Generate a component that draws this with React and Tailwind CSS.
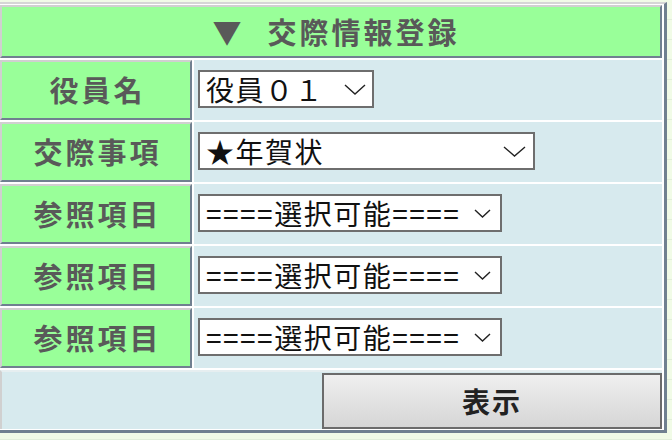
import React from 'react';

const font = { fontFamily: '"Noto Sans CJK JP", "Noto Sans", sans-serif' };

function Chevron({ w, h }) {
  return (
    <svg width={w} height={h} viewBox={`0 0 ${w} ${h}`} className="shrink-0">
      <polyline points={`1,1 ${w / 2},${h - 1} ${w - 1},1`} fill="none" stroke="#222" strokeWidth="1.4" />
    </svg>
  );
}

function FakeSelect({ value, width, chevW, chevH, padR }) {
  return (
    <div
      className={`${width} h-[38px] bg-white border-2 border-[#6e6e6e] flex items-center justify-between pl-[6px] text-[28px] leading-none tracking-[1.5px] text-[#111]`}
      style={{ paddingRight: padR }}
    >
      <span className="whitespace-pre">{value}</span>
      <Chevron w={chevW} h={chevH} />
    </div>
  );
}

function Row({ label, children }) {
  return (
    <div className="flex gap-[2px] h-[60px]">
      <div className="w-[192px] border-2 border-t-[#d0d0d0] border-l-[#d0d0d0] border-r-[#708090] border-b-[#708090] bg-[#99ff99] flex items-center justify-center text-[29px] font-bold text-[#595959] tracking-[3px] pl-[3px]">
        {label}
      </div>
      <div className="flex-1 bg-[#d7eaee] flex items-center pl-[4px] pb-[2px]">{children}</div>
    </div>
  );
}

export default function App() {
  return (
    <div
      className="min-h-screen w-full bg-[repeating-linear-gradient(to_bottom,#f1fbe7_0px,#f1fbe7_19px,#e2efda_19px,#e2efda_20px)]"
      style={font}
    >
      <div className="w-[667px] pt-[2px]">
        <div className="border-t-2 border-t-[#d6d6d6] border-r-[3px] border-b-[3px] border-r-[#708090] border-b-[#708090] bg-white pt-[1px] pr-[2px] pb-[1px] flex flex-col gap-[2px]">
          <div className="h-[53px] border-2 border-t-[#d0d0d0] border-l-[#d0d0d0] border-r-[#708090] border-b-[#708090] bg-[#99ff99] flex items-center justify-center gap-[26px] text-[29px] font-bold text-[#595959] pl-[10px]">
            <span>▼</span>
            <span className="tracking-[3px]">交際情報登録</span>
          </div>
          <Row label="役員名">
            <FakeSelect value="役員０１" width="w-[176px]" chevW={22} chevH={11} padR={6} />
          </Row>
          <Row label="交際事項">
            <FakeSelect value="★年賀状" width="w-[337px]" chevW={23} chevH={11} padR={7} />
          </Row>
          <Row label="参照項目">
            <FakeSelect value="====選択可能====" width="w-[304px]" chevW={17} chevH={9} padR={9} />
          </Row>
          <Row label="参照項目">
            <FakeSelect value="====選択可能====" width="w-[304px]" chevW={17} chevH={9} padR={9} />
          </Row>
          <Row label="参照項目">
            <FakeSelect value="====選択可能====" width="w-[304px]" chevW={17} chevH={9} padR={9} />
          </Row>
          <div className="h-[59px] border-l-2 border-t-2 border-l-[#d0d0d0] border-t-[#e6eef0] bg-[#d7eaee] flex items-center justify-end">
            <button className="w-[340px] h-[56px] border-2 border-[#6b6b6b] bg-gradient-to-b from-[#efefef] to-[#d6d6d6] text-[28px] font-bold text-[#222] tracking-[2px]">
              表示
            </button>
          </div>
        </div>
      </div>
    </div>
  );
}
